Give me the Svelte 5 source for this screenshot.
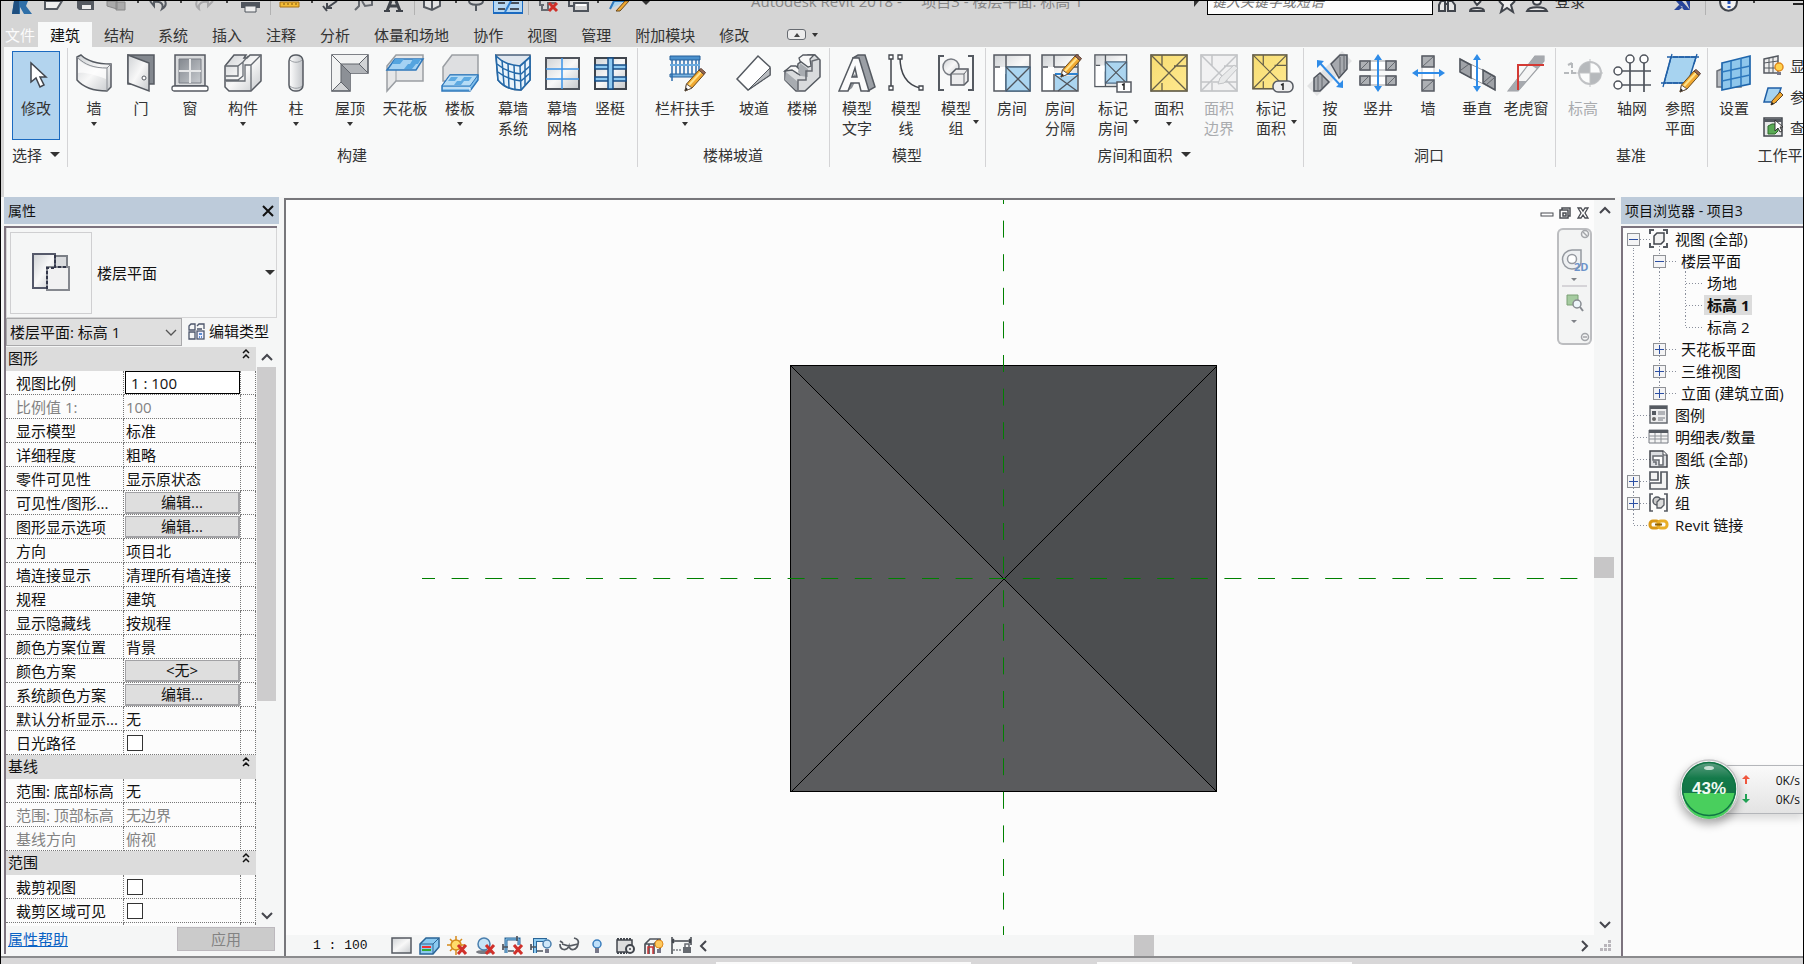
<script>
  const pencil = '<g transform="translate(14 14)"><path d="M5 23l1.500-7L19 2l5 4.500L12 20z" fill="#f0a830" stroke="#6b4a1c" stroke-width="1"/><path d="M9 17L21 4" stroke="#ffe28a" stroke-width="2"/><path d="M19 2l2-1.500 4.500 4L24 6.500z" fill="#9a6a50" stroke="#5b4038"/><path d="M5 23l1.500-7L12 20z" fill="#fff" stroke="#6b5a4c"/><path d="M5 23l1-3.500 2 1.800z" fill="#222"/></g>';
  const roomBase = '<rect x="1" y="1" width="36" height="36" fill="url(#steel)" stroke="#555a61" stroke-width="1.500"/><path d="M2 13h11v23H2z" fill="#fff"/><path d="M13 1v12M13 20v17M13 13h24M2 13h5" stroke="#555a61" stroke-width="1.500" fill="none"/>';
  const areaBase = '<rect x="1" y="1" width="36" height="36" fill="url(#gold)" stroke="#66604a" stroke-width="1.700"/><path d="M1 1l36 36M37 1L1 37M12 1v11M12 29v8M24 12h13" stroke="#66604a" stroke-width="1.300"/>';

  const icons = {
    modify: '<path d="M14 9v19l5-4 4 9 4-2-4-8h6z" fill="#fff" stroke="#41454d" stroke-width="1.500"/>',
    wall: '<path d="M2 3l4-2c6 6 15 9 30 9v23l-4 4C19 37 8 33 2 26z" fill="url(#steel)" stroke="#555a61" stroke-width="1.500"/><path d="M2 3c8 8 17 11 30 11v23M32 14l4-4" fill="none" stroke="#888c92"/><path d="M3 5c8 8 17 10 28 10v10C18 20 9 18 3 19z" fill="#fff" opacity=".7"/>',
    door: '<path d="M6 1h26v29H6z" fill="#83888f" stroke="#555a61" stroke-width="1.500"/><path d="M6 1l21 8v28L6 29z" fill="url(#steel)" stroke="#555a61" stroke-width="1.500"/><circle cx="22" cy="24" r="2" fill="#fff" stroke="#555a61"/>',
    window: '<path d="M4 1h30v31H4z" fill="#d9dbdd" stroke="#555a61" stroke-width="1.500"/><path d="M8 5h22v24H8z" fill="url(#glass)" stroke="#7a7f86"/><path d="M19 5v24M8 17h22" stroke="#e6e7e8" stroke-width="2"/><rect x="1" y="32" width="36" height="5" rx="2" fill="#fff" stroke="#555a61" stroke-width="1.300"/>',
    component: '<path d="M1 12L10 1h12l-2 3h3l3-3h11v26L27 37H5l-4-4z" fill="url(#steel)" stroke="#555a61" stroke-width="1.500"/><path d="M1 26h13l5-4V8l5-6M1 12h13v10H2M27 11v26M19 8l-5 4M37 1L27 11h-6v16H2" fill="none" stroke="#666b72" stroke-width="1.300"/>',
    column: '<rect x="12" y="1" width="14" height="36" rx="6" fill="url(#side)" stroke="#555a61" stroke-width="1.500"/><path d="M13 6c3 3 9 3 12 0M13 32c3 3 9 3 12 0" fill="none" stroke="#999da2"/>',
    roof: '<path d="M1 1h36v18H19v18H1z" fill="#d2d4d6" stroke="#555a61" stroke-width="1.500"/><path d="M1 1h36l-9 9H10v18l-9 9z" fill="#f2f3f3"/><path d="M28 10l9 9H19l-9-9z" fill="#b2b5b9"/><path d="M10 10l9 9v18l-9-9z" fill="#8c9096"/><path d="M1 1l9 9h18l9-9M28 10l9 9M10 10v18l-9 9M10 28l9 9M10 10l9 9" stroke="#60646b" fill="none"/>',
    ceiling: '<path d="M1 12L10 1h27v26H10L1 37z" fill="#e6e7e8" stroke="#9a9ea3" stroke-width="1.500"/><path d="M10 16v11" stroke="#9a9ea3"/><path d="M1 16L9 5h28l-7 11z" fill="#a5d2f3" stroke="#2f78bb" stroke-width="1.500"/><path d="M9 5h9l-4 5H6zM22 10h8l-4 5h-8zM27 5h8l-3 5h-8z" fill="#55a4df"/>',
    floor: '<path d="M2 13L11 1h26v22L28 27H2z" fill="#dedfe1" stroke="#9a9ea3" stroke-width="1.500"/><path d="M1 32L9 21h28v5l-8 11H1z" fill="#7fbdea" stroke="#2f78bb" stroke-width="1.500"/><path d="M1 32L9 21h28l-8 11z" fill="#b5dcf6" stroke="#2f78bb"/><path d="M10 23h7l-3 4H7zM23 23h8l-3 4h-8zM16 27h7l-3 4h-7z" fill="#5daae2"/><path d="M2 34h27v3" stroke="#fff" fill="none"/>',
    curtainSystem: '<path d="M2 1h34v25L27 36C15 36 8 31 4 26z" fill="#dfe6ee" stroke="#4b617c" stroke-width="1.500"/><path d="M2 2c7 7 14 9 24 10l10-9v23L27 36C15 36 8 31 4 26z" fill="#e8f3fb" stroke="#2368a8" stroke-width="1.700"/><path d="M3 10c7 6 14 9 24 10l9-8M4 18c7 6 14 8 23 9l9-8M8 6l2 25M14 9l1 25M20 11l1 25M26 12l1 24M31 8v23" fill="none" stroke="#2368a8" stroke-width="1.500"/>',
    curtainGrid: '<rect x="3" y="4" width="33" height="31" fill="url(#steel)" stroke="#4f545c" stroke-width="2"/><path d="M3 15h33M3 25h33M19 4v31" stroke="#3d94e8" stroke-width="1.500"/>',
    mullion: '<rect x="4" y="4" width="31" height="31" fill="url(#steel)" stroke="#3f454d" stroke-width="2"/><path d="M4 11h31v4H4zM4 23h31v4H4z" fill="#8fcaf2" stroke="#174e86" stroke-width="1.500"/><path d="M17 4h5v31h-5z" fill="#8fcaf2" stroke="#174e86" stroke-width="1.500"/>',
    railing: '<path d="M4 2h30v4H4z" fill="#4a90cc" stroke="#245f99"/><path d="M4 20h30v3H4z" fill="#7ab5e2" stroke="#245f99"/><path d="M6 6v21M10 6v14M14 6v14M18 6v14M22 6v14M26 6v14M30 6v14M33 6v14" stroke="#2d6ead" stroke-width="1.500"/><path d="M4 11h30" stroke="#6aaade" stroke-width="2"/>' + pencil,
    ramp: '<path d="M2 25L23 2l12 11v8L13 36z" fill="#fff" stroke="#555a61" stroke-width="1.500"/><path d="M13 36L35 14v7z" fill="#b9bcc0" stroke="#555a61"/>',
    stair: '<path d="M2 17l6-3 6 5 1-9 4-3 6 5V1h7l5 5v17L22 37h-9L2 26z" fill="#d9dbdd" stroke="#555a61" stroke-width="1.500"/><path d="M16 4l4-3h11l-4 4 1 7-3 1-8-6zM2 17l6-5h5l6 6-2 3-8-5z" fill="#f8f8f8" stroke="#555a61" stroke-width="1.300"/><path d="M17 9l8 6v8l-7-1-3-4zM3 18l12 10v8h-2L2 26z" fill="#a8acb1"/><path d="M15 36V26h8v-9h6V7l7-2" fill="none" stroke="#666a70" stroke-width="1.500"/>',
    modelText: '<path d="M15 4l5-3h7l10 32-7 4z" fill="#9b9fa5" stroke="#555a61" stroke-width="1.500"/><path d="M10 37l4-3 3-6h-4zM14 23l3-3 2 3z" fill="#8a8e94"/><path d="M1 37L15 4h6l10 33h-8l-2-8h-8l-3 8zM14 23h5l-2-9z" fill="#fbfbfb" fill-rule="evenodd" stroke="#555a61" stroke-width="1.500"/>',
    modelLine: '<path d="M4 3v31M13 3c0 18 8 28 20 31" fill="none" stroke="#41454c" stroke-width="1.500"/><path d="M2 1h4v4H2zM2 32h4v4H2zM11 1h4v4h-4zM32 32h4v4h-4z" fill="#fff" stroke="#41454c" stroke-width="1.300"/>',
    modelGroup: '<path d="M7 2H2v34h5M31 2h5v34h-5" fill="none" stroke="#555a61" stroke-width="2"/><circle cx="14" cy="13" r="8" fill="url(#steel)" stroke="#777b82" stroke-width="1.500"/><path d="M14 20l5-5h12v12l-4 4H14z" fill="#ececed" stroke="#555a61" stroke-width="1.500"/><path d="M14 20h13v11M27 20l4-5" fill="none" stroke="#666a70"/>',
    room: roomBase + '<path d="M13 13h24v24H13z" fill="#abd5f0" stroke="#4f6d88" stroke-width="1.500"/><path d="M13 13l24 24M37 13L13 37" stroke="#4f545c" stroke-width="1.300"/>',
    roomSep: roomBase + '<path d="M14 22h22v14H14z" fill="#abd5f0"/><path d="M14 20h23" stroke="#2d82d0" stroke-width="2"/><path d="M14 21l22 16M37 21L17 37" stroke="#4f545c" stroke-width="1.300"/><g transform="translate(1 -14)">' + pencil + '</g>',
    tagRoom: '<g transform="scale(.88)">' + roomBase + '<path d="M13 9h24v24H13z" fill="#abd5f0" stroke="#4f6d88" stroke-width="1.500"/><path d="M13 9l24 24M37 9L13 33" stroke="#4f545c" stroke-width="1.300"/></g><rect x="23" y="28" width="14" height="10" fill="#fff" stroke="#555a61" stroke-width="1.500"/><path d="M28 31l2-1v6" stroke="#222" stroke-width="1.500" fill="none"/>',
    area: areaBase,
    areaBoundary: '<g opacity=".4"><rect x="1" y="1" width="36" height="36" fill="#e7e7e9" stroke="#74777d" stroke-width="1.700"/><path d="M1 1l36 36M37 1L1 37M12 1v11M12 29v8M24 12h13M1 28h36" stroke="#74777d" stroke-width="1.500"/><path d="M18 30l2-6L34 11l4 3-14 15z" fill="#d2d2d4" stroke="#74777d"/></g>',
    tagArea: '<g transform="scale(.94)">' + areaBase + '</g><rect x="21" y="27" width="20" height="11" rx="5" fill="#eee" stroke="#555a61" stroke-width="1.500"/><path d="M29 31l2-1v6" stroke="#222" stroke-width="1.500" fill="none"/>',
    byFace: '<path d="M1 37L36 2" stroke="#e2e3e4" stroke-width="14"/><path d="M20 10l9-9h7v14l-8 9zM3 37V24l6-5 9 9-9 9z" fill="#a6a9ae" stroke="#4f545c" stroke-width="1.500"/><path d="M29 3v18M33 2v15M7 22v15M11 22v12" stroke="#65696f"/><path d="M8 8l22 24" stroke="#2f8ce8" stroke-width="2"/><path d="M6 6v8l7-7zM32 34v-8l-7 7z" fill="#2f8ce8"/>',
    shaft: '<path d="M1 7h36v9H1zM1 22h36v9H1z" fill="#fff" stroke="#9a9da2"/><path d="M1 7h10v9H1zM27 7h10v9H27zM1 22h10v9H1zM27 22h10v9H27z" fill="#adb0b4" stroke="#555a61" stroke-width="1.500"/><path d="M2 15l7-7M29 15l7-7M2 30l7-7M29 30l7-7" stroke="#666a70"/><path d="M19 4v30" stroke="#2f8ce8" stroke-width="2"/><path d="M19 0l-4 6h8zM19 38l-4-6h8z" fill="#2f8ce8"/>',
    wallOpen: '<path d="M13 2h12v34H13z" fill="#fff" stroke="#c0c2c5"/><path d="M13 2h12v11H13zM13 26h12v11H13z" fill="#adb0b4" stroke="#555a61" stroke-width="1.500"/><path d="M14 12l10-9M14 36l10-9" stroke="#666a70"/><path d="M6 19h27" stroke="#2f8ce8" stroke-width="2"/><path d="M3 19l6-4v8zM36 19l-6-4v8z" fill="#2f8ce8"/>',
    vertical: '<path d="M2 5l35 17v14L2 18z" fill="#fff" stroke="#9a9da2"/><path d="M2 5l11 6v13L2 18zM25 16l12 7v13l-12-7z" fill="#9fa2a7" stroke="#4f545c" stroke-width="1.500"/><path d="M3 16l8-6M26 28l8-7M28 31l8-7" stroke="#60646a"/><path d="M19 4v30" stroke="#2f8ce8" stroke-width="2"/><path d="M19 0l-4 6h8zM19 38l-4-6h8z" fill="#2f8ce8"/>',
    dormer: '<path d="M1 37L28 2h9v5L11 37z" fill="#f5f5f5" stroke="#9da0a5" stroke-width="1.200"/><path d="M22 10l6-8h9v5L30 15zM1 37l8-10h5l6 0-9 10z" fill="#a6a9ae"/><path d="M11 36V11h26" fill="none" stroke="#d33a34" stroke-width="2"/>',
    level: '<g opacity=".5"><path d="M0 19h20M8 9v9M4 11l4-2" stroke="#777b80" stroke-width="2" stroke-dasharray="5 2" fill="none"/><circle cx="26" cy="19" r="11" fill="#fff" stroke="#8a8d92" stroke-width="2"/><path d="M26 8a11 11 0 0 0-11 11h11zM26 30a11 11 0 0 0 11-11H26z" fill="#777b80"/><path d="M26 5v28M12 19h27" stroke="#8a8d92"/></g>',
    grid: '<path d="M17 9v29M31 9v29M9 17h29M9 31h29" stroke="#4f545c" stroke-width="1.700"/><g fill="#fff" stroke="#4f545c" stroke-width="1.500"><circle cx="17" cy="5" r="4"/><circle cx="31" cy="5" r="4"/><circle cx="5" cy="17" r="4"/><circle cx="5" cy="31" r="4"/></g>',
    refPlane: '<path d="M10 3h25l-8 26H3z" fill="#a7d3f0" stroke="#1f5fa6" stroke-width="1.500"/><path d="M6 3h32M0 29h30M11 0L2 33M36 0l-3 10" stroke="#1f5fa6" stroke-width="1.300" stroke-dasharray="5 1"/><g transform="translate(0 1)">' + pencil + '</g>',
    set: '<path d="M2 17l14-6h10v22H2z" fill="#b9bdc2" stroke="#6d7178" stroke-width="1.500"/><path d="M7 9l28-7v28L7 36z" fill="#8fc7ec" stroke="#1f66ac" stroke-width="1.700"/><path d="M7 18l28-6M7 27l28-6M16 7v27M26 4v28" stroke="#2d78bd" stroke-width="1.500"/>'
  };

  const groups = [
    { title: '构建', tools: [
      ['wall', '墙', '', 'w48', 'down'], ['door', '门', '', 'w46'], ['window', '窗', '', 'w52'], ['component', '构件', '', 'w54', 'down'],
      ['column', '柱', '', 'w52', 'down'], ['roof', '屋顶', '', 'w56', 'down'], ['ceiling', '天花板', '', 'w54'], ['floor', '楼板', '', 'w56', 'down'],
      ['curtainSystem', '幕墙', '系统', 'w50'], ['curtainGrid', '幕墙', '网格', 'w48'], ['mullion', '竖梃', '', 'w48']] },
    { title: '楼梯坡道', tools: [['railing', '栏杆扶手', '', 'w90', 'down'], ['ramp', '坡道', '', 'w48'], ['stair', '楼梯', '', 'w48']] },
    { title: '模型', tools: [['modelText', '模型', '文字', 'w50'], ['modelLine', '模型', '线', 'w48'], ['modelGroup', '模型', '组', 'w52', 'side']] },
    { title: '房间和面积', more: true, tools: [
      ['room', '房间', '', 'w48'], ['roomSep', '房间', '分隔', 'w48'], ['tagRoom', '标记', '房间', 'w58', 'side'], ['area', '面积', '', 'w54', 'down'],
      ['areaBoundary', '面积', '边界', 'w46', '', true], ['tagArea', '标记', '面积', 'w58', 'side']] },
    { title: '洞口', tools: [['byFace', '按', '面', 'w48'], ['shaft', '竖井', '', 'w48'], ['wallOpen', '墙', '', 'w52'], ['vertical', '垂直', '', 'w46'], ['dormer', '老虎窗', '', 'w52']] },
    { title: '基准', tools: [['level', '标高', '', 'w50', '', true], ['grid', '轴网', '', 'w48'], ['refPlane', '参照', '平面', 'w48']] }
  ];

  const smallTools = [
    ['显示', '<path d="M1 4l14-3v17H1z" fill="#eee" stroke="#555a61" stroke-width="1.500"/><path d="M6 3v15M10 2v16M1 8l14-2M1 13h14" stroke="#555a61"/><circle cx="16" cy="12" r="4" fill="#ffd34f" stroke="#e08a1e" stroke-width="1.500"/><path d="M14 17h4v3h-4z" fill="#778"/>'],
    ['参照', '<path d="M5 2h13l-5 14H1z" fill="#a7d3f0" stroke="#1f5fa6" stroke-width="1.500"/><path d="M8 19l1-4 8-9 3 3-8 8z" fill="#f0a830" stroke="#5d4326"/><path d="M8 19l1-3 2 2z" fill="#222"/>'],
    ['查看器', '<path d="M1 1h18v18H1z" fill="#e7e8e9" stroke="#41454c" stroke-width="1.500"/><path d="M1 2h18v3H1z" fill="#555a61"/><path d="M5 9l4-2h6v7l-3 3H5z" fill="#5aab55" stroke="#2d6a2a"/><path d="M12 3v11l3-3 2 4 2-1-2-4h3z" fill="#fff" stroke="#333"/>']
  ];

  const tabs = ['结构', '系统', '插入', '注释', '分析', '体量和场地', '协作', '视图', '管理', '附加模块', '修改'];

  const quick = [
    ['app', 38, 'Revit', '<path d="M5 0h14l-2 5 6 8h-8l-4-7v7H3z" fill="#2f6fa8"/><path d="M5 0h5v13H3z" fill="#1f4f80"/>'],
    ['open', 30, '打开', '<path d="M2 0h17l-5 8H2z" fill="#eee" stroke="#555a61" stroke-width="2"/>'],
    ['save', 32, '保存', '<path d="M3 0h17v9H5L3 7z" fill="#555a61"/><path d="M8 4h9v4H8z" fill="#eee"/>'],
    ['sync', 30, '同步', '<path d="M2 0h10v8L2 5zM11 1h9v8h-9z" fill="#aaa" stroke="#888"/>'],
    ['dot', 14], ['undo', 28, '放弃', '<path d="M2 0l4 5V1c7-1 10 2 8 7 5-3 4-6 3-8" fill="none" stroke="#555a61" stroke-width="2"/>'],
    ['dot', 16], ['redo', 30, '重做', '<path d="M20 0l-5 5V1C8 0 5 3 6 8 2 5 3 2 4 0" fill="none" stroke="#a8a8aa" stroke-width="2"/>'],
    ['dot', 16], ['print', 30, '打印', '<path d="M2 1h19v6H2z" fill="#4f545c"/><path d="M6 5h11v6H6z" fill="#eee" stroke="#4f545c"/>'],
    ['sep', 10], ['measure', 28, '测量', '<path d="M2 1h19v5H2z" fill="#f3bb35" stroke="#a87216"/><path d="M6 2v2M10 2v2M14 2v2M18 2v2" stroke="#7d5410"/>'],
    ['dot', 18], ['dims', 18, '对齐尺寸', '<path d="M18 0L8 7M8 2v5h5M4 5l4 5" fill="none" stroke="#444850" stroke-width="2"/>'],
    ['gap', 12], ['tag', 26, '标记', '<path d="M2 9l4-4V0M9 0l3 5 7-1V0" fill="none" stroke="#666a70" stroke-width="2"/>'],
    ['text', 32, '文字', '<path d="M5 10L9 0M14 0l4 10M8 5h7" stroke="#3f434a" stroke-width="3"/><path d="M2 10h6M14 10h7" stroke="#3f434a" stroke-width="2"/>'],
    ['sep', 10], ['view3d', 26, '三维视图', '<path d="M3 0v6l8 3 8-4V0" fill="#e3e4e5" stroke="#555a61" stroke-width="2"/><path d="M11 0v9" stroke="#555a61" stroke-width="2"/>'],
    ['dot', 22], ['section', 18, '剖面', '<path d="M4 0c0 5 14 5 14 0M11 4v6" fill="none" stroke="#555a61" stroke-width="2"/>'],
    ['gap', 8], ['thin', 30, '细线', '<path d="M1 2h7M1 8h7M13 2h9M13 8h9" stroke="#47505c" stroke-width="2"/><path d="M8 11l6-11" stroke="#2f7fd0" stroke-width="2"/>'],
    ['sep', 10], ['closeHidden', 30, '关闭隐藏窗口', '<path d="M3 0v4h4M5 4v5h6V2h8" fill="none" stroke="#666a70" stroke-width="2"/><path d="M12 2l8 8M20 2l-8 8" stroke="#cf2f28" stroke-width="3"/>'],
    ['switch', 30, '切换窗口', '<path d="M7 2h14v8H7zM2 0v5h4" fill="none" stroke="#4f545c" stroke-width="2"/><path d="M9 3h10v2H9z" fill="#fff"/>'],
    ['dot', 10], ['ui', 32, '用户界面', '<path d="M2 8L6 0h12" fill="#a7d3f0" stroke="#2d78bd" stroke-width="2"/><path d="M8 10l9-10h4l-9 10z" fill="#f0a830" stroke="#6b4a1c"/>'],
    ['caret', 22]
  ];

  const account = [
    ['搜索', '<path d="M3 10V4l2-4h4v10zM12 10V0h4l3 4v6zM8 3h5" fill="#e8e8e8" stroke="#41454c" stroke-width="2"/>'],
    ['通讯中心', '<path d="M8 0l3 4 4-4M4 10c0-4 14-4 14 0z" fill="#eee" stroke="#41454c" stroke-width="2"/>'],
    ['收藏夹', '<path d="M3 0l4 4-2 7 6-4 6 4-2-7 4-4" fill="#eee" stroke="#41454c" stroke-width="2"/>'],
    ['用户', '<path d="M7 0c0 5 8 5 8 0M1 10c2-5 18-5 20 0z" fill="#eee" stroke="#41454c" stroke-width="2"/>']
  ];

  const props = [
    { head: '图形' },
    { k: '视图比例', v: '1 : 100', type: 'input' },
    { k: '比例值 1:', v: '100', off: true },
    { k: '显示模型', v: '标准' },
    { k: '详细程度', v: '粗略' },
    { k: '零件可见性', v: '显示原状态' },
    { k: '可见性/图形...', v: '编辑...', type: 'button' },
    { k: '图形显示选项', v: '编辑...', type: 'button' },
    { k: '方向', v: '项目北' },
    { k: '墙连接显示', v: '清理所有墙连接' },
    { k: '规程', v: '建筑' },
    { k: '显示隐藏线', v: '按规程' },
    { k: '颜色方案位置', v: '背景' },
    { k: '颜色方案', v: '<无>', type: 'button' },
    { k: '系统颜色方案', v: '编辑...', type: 'button' },
    { k: '默认分析显示...', v: '无' },
    { k: '日光路径', type: 'check' },
    { head: '基线' },
    { k: '范围: 底部标高', v: '无' },
    { k: '范围: 顶部标高', v: '无边界', off: true },
    { k: '基线方向', v: '俯视', off: true },
    { head: '范围' },
    { k: '裁剪视图', type: 'check' },
    { k: '裁剪区域可见', type: 'check' },
    { k: '', type: 'check' }
  ];

  const treeIcons = {
    views: '<path d="M5 1H1v4M1 14v4h4M14 1h4v4M18 14v4h-4" fill="none" stroke="#555a61" stroke-width="2"/><path d="M5 7l3-3h7v8l-3 3H5z" fill="#f2f2f2" stroke="#41454c" stroke-width="1.500"/>',
    legend: '<path d="M1 1h17v17H1z" fill="#ededee" stroke="#666a70" stroke-width="1.500"/><path d="M1 1h17v3H1z" fill="#555a61"/><path d="M3 6h4v4H3z" fill="#555a61"/><circle cx="5" cy="14" r="2" fill="#666"/><path d="M9 7h7M9 9h7M9 13h7M9 15h5" stroke="#777b82"/>',
    schedule: '<path d="M0 3h19v13H0z" fill="#f4f4f4" stroke="#777b82"/><path d="M0 3h19v3H0z" fill="#555a61"/><path d="M0 9h19M0 12h19M6 6v10M12 6v10" stroke="#8d9196"/>',
    sheet: '<path d="M1 2h13l4 4v12H1z" fill="#dcdee1" stroke="#41454c" stroke-width="1.500"/><path d="M14 2v4h4" fill="#fff" stroke="#41454c"/><path d="M4 7h10v9h-4v-5H4z" fill="#fff" stroke="#666a70" stroke-width="1.500"/><path d="M4 13h3v3" fill="none" stroke="#666a70" stroke-width="1.500"/>',
    family: '<path d="M1 1h8v8H1zM12 1h6v17H1v-6h11z" fill="#f3f3f3" stroke="#555a61" stroke-width="1.700"/>',
    group: '<path d="M4 1H1v17h3M15 1h3v17h-3" fill="none" stroke="#555a61" stroke-width="1.700"/><circle cx="8" cy="8" r="4" fill="#ccc" stroke="#555a61" stroke-width="1.500"/><path d="M8 9l3-3h4v6l-3 3H8z" fill="#ddd" stroke="#555a61" stroke-width="1.300"/>',
    link: '<rect x="1" y="6" width="9" height="7" rx="3" fill="none" stroke="#d99714" stroke-width="3"/><rect x="9" y="6" width="9" height="7" rx="3" fill="none" stroke="#e9ae26" stroke-width="3"/><path d="M6 9.500h7" stroke="#8f6208" stroke-width="2"/>'
  };

  const tree = [
    { l: 1, t: '视图 (全部)', box: '-', icon: 'views', first: true, down: true },
    { l: 2, t: '楼层平面', box: '-', down: true },
    { l: 3, t: '场地' },
    { l: 3, t: '标高 1', sel: true },
    { l: 3, t: '标高 2', last: true },
    { l: 2, t: '天花板平面', box: '+' },
    { l: 2, t: '三维视图', box: '+' },
    { l: 2, t: '立面 (建筑立面)', box: '+', last: true },
    { l: 1, t: '图例', icon: 'legend' },
    { l: 1, t: '明细表/数量', icon: 'schedule' },
    { l: 1, t: '图纸 (全部)', icon: 'sheet' },
    { l: 1, t: '族', box: '+', icon: 'family' },
    { l: 1, t: '组', box: '+', icon: 'group' },
    { l: 1, t: 'Revit 链接', icon: 'link', last: true }
  ];
  const treeWidth = { 1: 50, 2: 56, 3: 82 };

  const cross = '<path d="M11 9l8 9M19 9l-8 9" stroke="#d0302a" stroke-width="3"/>';
  const viewTools = [
    ['详细程度', '<rect x="1" y="2" width="19" height="15" fill="url(#steel)" stroke="#555a61" stroke-width="1.500"/>'],
    ['视觉样式', '<path d="M1 8l6-6h13v9l-6 7H1z" fill="#8ccaf0" stroke="#2a6496" stroke-width="1.500"/><path d="M1 8h13v10M14 8l6-6" stroke="#2a6496" fill="none"/><path d="M3 11h9" stroke="#e33" stroke-width="2"/><path d="M3 14h9" stroke="#3a3" stroke-width="2"/>'],
    ['日光路径', '<path d="M9 0v19M0 9h18M3 3l12 12M15 3L3 15" stroke="#d58a1b" stroke-width="1.500"/><circle cx="9" cy="9" r="5" fill="#ffdc6b" stroke="#d58a1b" stroke-width="1.500"/>' + cross],
    ['阴影', '<ellipse cx="9" cy="16" rx="8" ry="2" fill="#777b82"/><circle cx="9" cy="8" r="6" fill="#c7e4f7" stroke="#4a7fae" stroke-width="1.500"/>' + cross],
    ['裁剪视图', '<path d="M3 17V3h13v6" fill="none" stroke="#2a6496" stroke-width="3"/><path d="M3 17V3h13v6" fill="none" stroke="#8ccaf0" stroke-width="1"/><path d="M0 11h5M14 0v5M0 8v6M5 15h6" fill="none" stroke="#4f545c" stroke-width="1.700"/>' + cross],
    ['显示裁剪区域', '<path d="M4 17V4h12" fill="none" stroke="#2a6496" stroke-width="4"/><path d="M4 17V4h12" fill="none" stroke="#8ccaf0" stroke-width="2"/><path d="M0 11h5M0 8v6M6 15h6" fill="none" stroke="#4f545c" stroke-width="1.700"/><circle cx="16" cy="8" r="4" fill="#cfe8fa" stroke="#4a7fae" stroke-width="1.500"/><path d="M14 13h4v4h-4z" fill="#778"/>'],
    ['临时隐藏', '<path d="M1 5l3 2M1 8c0 7 7 7 9 2 1 6 8 4 9-2 1-3 0-5-4-6M3 8l7 2 9-2" fill="none" stroke="#555a61" stroke-width="1.700"/>'],
    ['显示隐藏图元', '<circle cx="10" cy="8" r="4" fill="#bfe0fa" stroke="#3a7dbd" stroke-width="1.500"/><path d="M8 12h4v5H8z" fill="#778"/>'],
    ['临时视图属性', '<path d="M2 4h15v12H2z" fill="#ddd" stroke="#41454c" stroke-width="1.500"/><path d="M2 3h15M2 17h10" stroke="#41454c" stroke-width="2" stroke-dasharray="2 1"/><circle cx="15" cy="13" r="4" fill="#eee" stroke="#41454c" stroke-width="2"/><circle cx="15" cy="13" r="1" fill="#41454c"/>'],
    ['分析模型', '<path d="M2 18V8l5-5h10v10M2 8h9l5-5M11 8v10M6 8v10" fill="none" stroke="#4f545c" stroke-width="1.700"/><path d="M5 18v-7h5v7" fill="none" stroke="#c33" stroke-width="1.500"/><circle cx="16" cy="8" r="4" fill="#ffc95c" stroke="#e08a1e"/><path d="M14 13h4v4h-4z" fill="#778"/>'],
    ['显示约束', '<path d="M1 1v17M20 1v8M1 5h19M3 3l-2 2 2 2M18 3l2 2-2 2" fill="none" stroke="#41454c" stroke-width="1.500"/><path d="M2 14h8" stroke="#41454c" stroke-dasharray="2 1"/><path d="M12 11h8v6h-8z" fill="#666a70"/><path d="M14 11V8h4v3" fill="none" stroke="#666a70" stroke-width="1.500"/>']
  ];
</script>

{#snippet chev(d)}
  <svg class="chev" viewBox="0 0 12 12"><path d={d} fill="none" stroke="#45464d" stroke-width="2" /></svg>
{/snippet}

{#snippet tool([icon, a, b, w, arrow, off])}
  <button class="tool {w}" class:off disabled={off}>
    <svg class="big" viewBox="0 0 38 38">{@html icons[icon]}</svg>
    <span>{a}</span>
    {#if b}<span>{b}</span>{/if}
    {#if arrow === 'down'}<i class="tri under"></i>{/if}
    {#if arrow === 'side'}<i class="tri aside"></i>{/if}
  </button>
{/snippet}

<svg class="defs" aria-hidden="true">
  <defs>
    <linearGradient id="steel" x1="0" y1="0" x2="1" y2="1"><stop offset="0" stop-color="#cfd2d5" /><stop offset=".5" stop-color="#f8f8f8" /><stop offset="1" stop-color="#c6c9cc" /></linearGradient>
    <linearGradient id="side"><stop offset="0" stop-color="#fff" /><stop offset="1" stop-color="#c2c5c9" /></linearGradient>
    <linearGradient id="glass" x1="0" y1="0" x2="1" y2="1"><stop offset="0" stop-color="#83888f" /><stop offset="1" stop-color="#c9ccd0" /></linearGradient>
    <linearGradient id="gold" x1="0" y1="0" x2="1" y2="1"><stop offset="0" stop-color="#f7dd72" /><stop offset="1" stop-color="#ffe98f" /></linearGradient>
    <linearGradient id="orb" x1="0" y1="0" x2="0" y2="1"><stop offset="0" stop-color="#5f9f83" /><stop offset=".3" stop-color="#147a4a" /><stop offset="1" stop-color="#0d6e42" /></linearGradient>
  </defs>
</svg>

<div class="app">
  <header class="titlebar">
    <div class="quick">
      {#each quick as [id, w, label, art]}
        {#if id === 'sep'}
          <i class="qsep" style:width="{w}px"></i>
        {:else if id === 'gap'}
          <i style:width="{w}px"></i>
        {:else if id === 'dot' || id === 'caret'}
          <button class="qbtn" aria-label="展开" style:width="{w}px"><i class="nub" class:wide={id === 'caret'}></i></button>
        {:else}
          <button class="qbtn" class:on={id === 'thin'} aria-label={label} style:width="{w}px"><svg width="23" height="14" viewBox="0 0 23 14">{@html art}</svg></button>
        {/if}
      {/each}
    </div>
    <h1 class="cut">Autodesk Revit 2018 - &nbsp; &nbsp; 项目3 - 楼层平面: 标高 1</h1>
    <svg class="play" width="5" height="7" viewBox="0 0 5 7"><path d="M0 0h5L0 6z" fill="#333" /></svg>
    <input class="search" aria-label="搜索" placeholder="键入关键字或短语" />
    <div class="account">
      {#each account as [label, art]}
        <button class="qbtn acc" aria-label={label}><svg width="23" height="14" viewBox="0 0 23 14">{@html art}</svg></button>
      {/each}
      <a class="cut login" href="#login">登录</a>
    </div>
    <div class="help">
      <button class="qbtn" aria-label="Exchange"><svg width="23" height="14" viewBox="0 0 23 14"><path d="M5 0h6l8 9h-6zM8 4L3 9h5l4-3zM15 0h4v9z" fill="#27449a" /></svg></button>
      <i class="qsep"></i>
      <button class="qbtn" aria-label="帮助"><svg width="23" height="14" viewBox="0 0 23 14"><path d="M3 0c0 13 17 13 17 0" fill="#f2f2f2" stroke="#41454c" stroke-width="2" /><path d="M12 0v3M12 5v2" stroke="#2b56b8" stroke-width="3" /></svg></button>
      <button class="qbtn" aria-label="更多"><i class="nub"></i></button>
      <button class="qbtn min" aria-label="最小化"></button>
    </div>
  </header>

  <nav class="tabs">
    <a class="file" href="#file">文件</a>
    <a class="active" href="#build">建筑</a>
    {#each tabs as t}<a href="#tab">{t}</a>{/each}
    <button class="toggle" aria-label="最小化功能区"><i class="up"></i></button>
    <i class="tri"></i>
  </nav>

  <section class="ribbon">
    <div class="group first">
      <div class="tools"><button class="tool w48 picked"><svg class="big" viewBox="0 0 38 38">{@html icons.modify}</svg><span>修改</span></button></div>
      <div class="gtitle">选择 <i class="tri lg"></i></div>
    </div>
    {#each groups as g}
      <div class="group">
        <div class="tools">{#each g.tools as t}{@render tool(t)}{/each}</div>
        <div class="gtitle">{g.title} {#if g.more}<i class="tri lg"></i>{/if}</div>
      </div>
    {/each}
    <div class="group cutoff">
      <div class="tools">
        {@render tool(['set', '设置', '', 'w48'])}
        <div class="stack">
          {#each smallTools as [label, art]}
            <button class="small"><svg width="21" height="21" viewBox="0 0 21 21">{@html art}</svg>{label}</button>
          {/each}
        </div>
      </div>
      <div class="gtitle">工作平面</div>
    </div>
  </section>

  <main>
    <aside class="props">
      <div class="phead"><h2>属性</h2><button aria-label="关闭"><svg width="12" height="12" viewBox="0 0 12 12"><path d="M1 1l10 10M11 1L1 11" stroke="#111" stroke-width="2" /></svg></button></div>
      <div class="pbody">
        <button class="kind">
          <span class="thumb"><svg width="42" height="42" viewBox="0 0 42 42"><path d="M23 4h14v13H23z" fill="#d9dbde" stroke="#7b7f86" stroke-width="2" /><path d="M3 2h22v34H3z" fill="url(#steel)" stroke="#55596a" stroke-width="2" /><path d="M17 15h22v23H17z" fill="#f1f1f2" stroke="#85888f" stroke-width="2" /><path d="M25 3v12h12M17 37V16h8" fill="none" stroke="#33374a" stroke-width="2" stroke-dasharray="3 2" /></svg></span>
          <span>楼层平面</span><i class="tri lg"></i>
        </button>
        <div class="pick">
          <div class="combo">
            <select aria-label="实例"><option>楼层平面: 标高 1</option></select>
            <svg width="12" height="8" viewBox="0 0 12 8"><path d="M1 1l5 5 5-5" fill="none" stroke="#555" stroke-width="1.300" /></svg>
          </div>
          <button class="edit"><svg width="17" height="17" viewBox="0 0 17 17"><path d="M1 3l2-2h4v6H1zM9 3l2-2h5v5M1 9h6v7H1zM9 6h5" fill="none" stroke="#4c566b" stroke-width="1.300" /><rect x="9" y="8" width="7" height="8" fill="#eef" stroke="#4c566b" stroke-width="1.300" /><path d="M11 11h3M11 14h1M13 14h1" stroke="#2b6fc2" stroke-width="1.500" /></svg>编辑类型</button>
        </div>
        <div class="scroller">
          <div class="tablebox">
            <table>
              <colgroup><col class="c1" /><col class="c2" /><col class="c3" /></colgroup>
              <tbody>
                {#each props as p, i}
                  {#if p.head}
                    <tr class="head"><th colspan="3"><div>{p.head}<svg width="8" height="10" viewBox="0 0 8 10"><path d="M1 4l3-3 3 3M1 9l3-3 3 3" fill="none" stroke="#111" stroke-width="1.500" /></svg></div></th></tr>
                  {:else}
                    <tr class:off={p.off}>
                      <td class="key"><label for="p{i}">{p.k}</label></td>
                      <td class="val">
                        {#if p.type === 'input'}<input id="p{i}" class="field" value={p.v} />
                        {:else if p.type === 'button'}<button id="p{i}" class="cellbtn">{p.v}</button>
                        {:else if p.type === 'check'}<input id="p{i}" type="checkbox" />
                        {:else}<output id="p{i}">{p.v}</output>{/if}
                      </td>
                      <td></td>
                    </tr>
                  {/if}
                {/each}
              </tbody>
            </table>
          </div>
          <div class="vbar">
            <span class="cap">{@render chev('M1 9l5-5 5 5')}</span>
            <div class="track"><i class="thumbbar"></i></div>
            <span class="cap">{@render chev('M1 3l5 5 5-5')}</span>
          </div>
        </div>
        <div class="pfoot"><a href="#help">属性帮助</a><button disabled>应用</button></div>
      </div>
    </aside>

    <section class="doc">
      <div class="row">
        <div class="canvas">
          <svg class="plan" aria-label="楼层平面">
            <path d="M505 166h426L718 379z" fill="#4d4f51" />
            <path d="M931 166v426L718 379z" fill="#4c4e50" />
            <path d="M505 166v426l213-213z" fill="#5a5b5d" />
            <path d="M505 592h426L718 379z" fill="#5a5b5d" />
            <path d="M505 166l426 426M931 166L505 592" stroke="#000" stroke-width="1" fill="none" />
            <rect x="504.500" y="165.500" width="426" height="426" fill="none" stroke="#000" />
            <path d="M717.500 0v736" stroke="#008000" stroke-dasharray="17 16.600" stroke-dashoffset="13" />
            <path d="M136 378.500h1156" stroke="#008000" stroke-dasharray="17 16.600" stroke-dashoffset="4" />
          </svg>
          <div class="winbtns">
            <button aria-label="最小化"><svg width="14" height="14" viewBox="0 0 14 14"><rect x="1" y="7" width="12" height="3" fill="#fff" stroke="#4a4c52" /></svg></button>
            <button aria-label="还原"><svg width="14" height="14" viewBox="0 0 14 14"><path d="M4 4V2h8v8h-2M2 4h8v8H2zM5 7h3v3H5z" fill="none" stroke="#4a4c52" stroke-width="1.500" /></svg></button>
            <button aria-label="关闭"><svg width="14" height="14" viewBox="0 0 14 14"><path d="M2 2h3l2 3 2-3h3L9 7l3 5H9L7 9l-2 3H2l3-5z" fill="#fff" stroke="#4a4c52" stroke-width="1.300" /></svg></button>
          </div>
          <div class="navbar">
            <svg width="35" height="117" viewBox="0 0 35 117">
              <g fill="none" stroke="#a3a5a9" stroke-width="1.500"><circle cx="28" cy="6" r="3.500" /><path d="M26 4l4 4" /><circle cx="28" cy="109" r="3.500" /><path d="M26 109h4" /></g>
              <path d="M24 22v12c0 6-5 7-9 7a9.500 9.500 0 1 1 0-19z" fill="#eef0f2" stroke="#9599a0" stroke-width="1.500" /><circle cx="15" cy="31" r="4.500" fill="#fff" stroke="#9599a0" stroke-width="1.500" />
              <text x="17" y="43" class="twod">2D</text>
              <path d="M14 50h6l-3 3zM14 92h6l-3 3z" fill="#7f8288" /><path d="M5 58h25" stroke="#b8b4bc" />
              <path d="M10 67h11v10H10z" fill="#a5cba0" stroke="#7ba075" /><circle cx="20" cy="76" r="4" fill="#eef6fb" stroke="#878b91" stroke-width="1.500" /><path d="M23 79l3 4" stroke="#878b91" stroke-width="2" />
            </svg>
          </div>
        </div>
        <div class="vbar canvasbar">
          <span class="cap">{@render chev('M1 9l5-5 5 5')}</span>
          <div class="track mid"><i class="block"></i></div>
          <span class="cap">{@render chev('M1 3l5 5 5-5')}</span>
        </div>
      </div>
      <div class="viewbar">
        <button class="scale">1 : 100</button>
        {#each viewTools as [label, art]}
          <button class="vt" aria-label={label}><svg width="21" height="19" viewBox="0 0 21 19">{@html art}</svg></button>
        {/each}
        <div class="hbar">
          <span>{@render chev('M8 1L3 6l5 5')}</span>
          <i class="block"></i>
          <span>{@render chev('M4 1l5 5-5 5')}</span>
        </div>
        <svg class="grip" width="12" height="12" viewBox="0 0 12 12"><path d="M8 0h3v3H8zM4 4h3v3H4zM8 4h3v3H8zM0 8h3v3H0zM4 8h3v3H4zM8 8h3v3H8z" fill="#b9b6bb" /></svg>
      </div>
    </section>

    <aside class="browser">
      <div class="phead"><h2>项目浏览器 - 项目3</h2></div>
      <ul class="tree">
        {#each tree as n}
          <li>
            <svg width={treeWidth[n.l]} height="22" viewBox="0 0 {treeWidth[n.l]} 22">
              <g stroke="#8a8f9c" stroke-dasharray="1 2" fill="none">
                <path d="M8.500 {n.first ? 11 : 0}V{n.l === 1 && n.last ? 11 : 22}" />
                {#if n.l === 1}<path d="M9 11.500h18" />{/if}
                {#if n.first}<path d="M34.500 18v4" />{/if}
                {#if n.l === 2}<path d="M34.500 0V{n.last ? 11 : 22}M35 11.500h17" />{/if}
                {#if n.l === 2 && n.down}<path d="M60.500 18v4" />{/if}
                {#if n.l === 3}<path d="M34.500 0v22M60.500 0V{n.last ? 11 : 22}M61 11.500h17" />{/if}
              </g>
              {#if n.box}
                <g transform="translate({n.l === 1 ? 2 : 28} 5)">
                  <rect x=".5" y=".5" width="12" height="12" fill="#f4f4f5" stroke="#8f9196" />
                  <path d="M2 6.500h9" stroke="#2c4fa3" stroke-width="1" />
                  {#if n.box === '+'}<path d="M6.500 2v9" stroke="#2c4fa3" stroke-width="1" />{/if}
                </g>
              {/if}
              {#if n.icon}<g transform="translate(24 1)">{@html treeIcons[n.icon]}</g>{/if}
            </svg>
            <span class:sel={n.sel}>{n.t}</span>
          </li>
        {/each}
      </ul>
    </aside>
  </main>

  <footer><i></i><i></i></footer>

  <div class="meter">
    <svg width="60" height="60" viewBox="0 0 60 60">
      <circle cx="30" cy="30" r="29" fill="#f6f6f6" stroke="#c3c3c5" stroke-width="1.500" />
      <circle cx="30" cy="30" r="27" fill="url(#orb)" />
      <path d="M4 34h52a26 26 0 0 1-52 0z" fill="#49cf5d" />
      <circle cx="30" cy="30" r="26.500" fill="none" stroke="#107445" stroke-width="1.500" />
      <ellipse cx="30" cy="9" rx="5" ry="2" fill="#fff" opacity=".7" />
      <text x="30" y="35" text-anchor="middle" class="pct">43%</text>
    </svg>
    <div class="speeds">
      <p><svg width="8" height="10" viewBox="0 0 8 10"><path d="M4 0l4 4H5v5H3V4H0z" fill="#f0583f" /></svg>0K/s</p>
      <p><svg width="8" height="10" viewBox="0 0 8 10"><path d="M4 9L0 5h3V0h2v5h3z" fill="#22a356" /></svg>0K/s</p>
    </div>
  </div>
</div>

<style>
  :global(body) { background: #d5d5d5; }
  * { box-sizing: border-box; margin: 0; }
  .app {
    position: relative; display: flex; flex-direction: column; height: 100vh; overflow: hidden;
    background: #d5d5d5; border: solid #000; border-width: 1px 1px 0 1px; color: #111;
    font: 15px/20px "Open Sans", "Noto Sans CJK SC", sans-serif;
  }
  button, input, select { font: inherit; color: inherit; padding: 0; border: 0; background: none; border-radius: 0; }
  svg { display: block; flex: none; overflow: visible; }
  i { display: block; flex: none; }
  .defs { position: absolute; width: 0; height: 0; }
  h1, h2 { font-size: 14px; font-weight: 400; }

  .tri { width: 0; height: 0; border: solid transparent; border-width: 4px 3px 0; border-top-color: #333; }
  .tri.lg { border-width: 5px 5px 0; }
  .chev { width: 12px; height: 12px; }

  .titlebar { display: flex; flex: none; height: 21px; overflow: hidden; align-items: flex-start; }
  .quick, .account, .help { display: flex; flex: none; }
  .qbtn { display: flex; justify-content: center; height: 14px; }
  .qbtn.on { background: #b5d6f1; border: solid #1b6ac0; border-width: 0 1px 2px; height: 13px; }
  .qsep { height: 14px; background: linear-gradient(#b2b2b2, #b2b2b2) center / 1px 100% no-repeat; }
  .nub { width: 2px; height: 2px; background: #444; }
  .nub.wide { width: 8px; height: 4px; background: none; border: solid transparent; border-width: 4px 4px 0; border-top-color: #333; }
  .cut { margin-top: -10px; line-height: 20px; }
  h1 { flex: 1; padding-left: 94px; font-size: 15px; color: #858585; white-space: pre; }
  .play { margin-right: 8px; }
  .search { flex: none; width: 226px; height: 34px; margin-top: -20px; padding: 6px 4px 0; border: 1px solid #000; background: #fdfdfd; font-size: 14px; font-style: italic; }
  .search::placeholder { color: #777; opacity: 1; }
  .acc { width: 30px; }
  .login { padding-left: 2px; color: #333; text-decoration: none; }
  .help { padding-left: 84px; }
  .help .qbtn { width: 26px; }
  .help .qsep { width: 20px; }
  .help .min { width: 10px; height: 4px; margin-left: 26px; border-bottom: 2px solid #222; }

  .tabs { display: flex; flex: none; height: 25px; align-items: center; }
  .tabs a { height: 25px; padding: 0 12px; line-height: 26px; color: #333; text-decoration: none; white-space: nowrap; }
  .tabs .file { padding: 0 3px 0 4px; color: #fbfbfb; }
  .tabs .active { padding: 0 12px; background: #f8f9f9; color: #111; }
  .toggle { display: grid; place-items: center; width: 19px; height: 11px; margin: 0 6px 0 26px; border: 1px solid #666a70; border-radius: 3px; background: #ececec; }
  .up { border: solid transparent; border-width: 0 3px 4px; border-bottom-color: #444; }

  .ribbon { display: flex; flex: none; height: 150px; margin-left: 3px; padding-top: 1px; background: #f8f9f9; overflow: hidden; }
  .group { flex: none; display: flex; flex-direction: column; height: 119px; padding: 3px 3px 0 2px; border-right: 1px solid #d4d4d6; }
  .group.first { padding: 3px 7px 0 8px; }
  .group.cutoff { border: 0; width: 120px; }
  .tools { display: flex; height: 89px; }
  .gtitle { display: flex; align-items: center; justify-content: center; gap: 8px; height: 27px; padding-top: 2px; color: #333; white-space: nowrap; }
  .cutoff .gtitle { padding-left: 40px; }
  .tool { position: relative; flex: none; display: flex; flex-direction: column; align-items: center; padding-top: 3px; color: #333; white-space: nowrap; }
  .tool .big { width: 38px; height: 38px; margin-bottom: 6px; }
  .picked { padding-top: 2px; border: 1px solid #1b6ac0; background: #b3d4ee; }
  .off { color: #a9abae; }
  .under { margin-top: 4px; }
  .aside { position: absolute; right: 3px; top: 69px; }
  .w46 { width: 46px; } .w48 { width: 48px; } .w50 { width: 50px; } .w52 { width: 52px; } .w54 { width: 54px; } .w56 { width: 56px; } .w58 { width: 58px; } .w90 { width: 90px; }
  .stack { display: flex; flex-direction: column; gap: 10px; padding: 4px 0 0 5px; }
  .small { display: flex; align-items: center; gap: 6px; height: 21px; color: #333; white-space: nowrap; }

  main { display: flex; flex: 1; min-height: 0; padding-left: 3px; background: #f5f6f6; border-bottom: 2px solid #8b8b8d; }
  .phead { display: flex; flex: none; align-items: center; justify-content: space-between; height: 27px; padding: 0 5px 0 4px; background: #bdcbda; }
  h2 { color: #111; white-space: nowrap; }
  .props { flex: none; display: flex; flex-direction: column; width: 275px; }
  .pbody { display: flex; flex: 1; min-height: 0; flex-direction: column; margin: 2px 2px 2px 0; border: solid #7c737e; border-width: 2px 0 0 2px; }
  .kind { display: flex; flex: none; align-items: center; gap: 5px; height: 90px; padding: 0 1px 0 3px; border: 1px solid #d5d5d6; border-top: 0; }
  .kind .tri { margin-left: auto; }
  .thumb { display: grid; place-items: center; width: 82px; height: 82px; border: 1px solid #cfcfd1; }
  .pick { display: flex; flex: none; align-items: flex-start; gap: 6px; height: 29px; }
  .combo { position: relative; width: 176px; height: 28px; border: 1px solid #a9a9ab; background: #dfdfdf; }
  .combo select { width: 100%; height: 100%; padding-left: 3px; appearance: none; }
  .combo svg { position: absolute; right: 4px; top: 10px; pointer-events: none; }
  .edit { display: flex; align-items: center; gap: 4px; height: 26px; white-space: nowrap; }
  .scroller { display: flex; flex: 1; min-height: 0; }
  .tablebox { flex: 1; overflow: hidden; background: #fcfcfc; }
  table { width: 100%; table-layout: fixed; border-spacing: 0; }
  .c2 { width: 117px; } .c3 { width: 15px; }
  td, th { height: 24px; padding: 0; line-height: 20px; font-weight: 400; text-align: left; white-space: nowrap; }
  td { border: dotted #777; border-width: 0 1px 1px 0; overflow: hidden; }
  th { background: #dcdcdc; }
  th div { display: flex; justify-content: space-between; height: 24px; padding: 1px 6px 0 2px; }
  th svg { margin-top: 1px; }
  .key { padding-left: 10px; }
  .val { padding-left: 1px; }
  tr.off { color: #828282; }
  .key label, .val output, .val input, .val button { display: block; }
  .val output { padding-left: 1px; }
  .field { width: 115px; height: 23px; padding-left: 5px; border: 1px solid #000; background: #fff; }
  .cellbtn { width: 115px; height: 22px; border: 1px solid #a2a2a5; border-width: 1px 2px 2px 1px; background: #dedede; line-height: 19px; }
  input[type="checkbox"] { appearance: none; width: 16px; height: 16px; margin-left: 2px; border: 1px solid #333; background: #fff; }
  .vbar { display: flex; flex: none; flex-direction: column; width: 21px; }
  .canvasbar { width: 21px; }
  .cap { display: grid; place-items: center; height: 20px; }
  .track { flex: 1; min-height: 0; padding: 0 1px; }
  .track.mid { display: flex; align-items: center; padding: 0; }
  .thumbbar { height: 62%; background: #cdcccd; }
  .block { width: 20px; height: 21px; background: #c7c6c7; }
  .pfoot { display: flex; flex: none; align-items: center; justify-content: space-between; height: 28px; padding: 0 2px 2px 2px; }
  .pfoot a { color: #0a62c4; }
  .pfoot button { width: 98px; height: 24px; border: 1px solid #bcb8bd; background: #cbcbcb; color: #838383; }

  .doc { display: flex; flex: 1; min-width: 0; flex-direction: column; margin: 1px 6px 0 5px; border: solid #77777b; border-width: 2px 0 0 2px; }
  .row { display: flex; flex: 1; min-height: 0; }
  .canvas { position: relative; flex: 1; min-width: 0; overflow: hidden; background: #fcfcfc; }
  .plan { width: 100%; height: 100%; }
  .winbtns { position: absolute; top: 6px; right: 4px; display: flex; gap: 4px; }
  .navbar { position: absolute; top: 28px; right: 2px; border-radius: 6px; background: #f3f4f4; box-shadow: inset 0 0 0 2px #bcbdc0; }
  .twod { font: 700 11px "Open Sans", sans-serif; fill: #6c93c9; }
  .viewbar { display: flex; flex: none; align-items: center; height: 21px; padding-left: 27px; }
  .scale { margin-right: 20px; font: 13px/20px "Liberation Mono", monospace; }
  .vt { display: grid; place-items: center; width: 28px; height: 20px; }
  .hbar { display: flex; flex: 1; align-items: center; justify-content: space-between; padding: 0 5px 0 2px; }
  .grip { margin: 0 3px 0 5px; }

  .browser { flex: none; display: flex; flex-direction: column; width: 182px; }
  .tree { flex: 1; margin: 2px 0 0; padding: 0 0 0 2px; border: solid #7c737e; border-width: 2px 0 0 2px; background: #fcfcfc; list-style: none; overflow: hidden; }
  .tree li { display: flex; align-items: center; height: 22px; white-space: nowrap; }
  .sel { margin-left: -3px; padding: 0 3px; background: #dcdcdc; font-weight: 700; }

  footer { display: flex; flex: none; gap: 126px; height: 6px; padding: 4px 0 0 715px; background: #d8d7d8; }
  footer i { width: 255px; height: 2px; background: #fafafa; }

  .meter { position: absolute; right: 0; bottom: 145px; display: flex; align-items: center; width: 124px; }
  .meter > svg { z-index: 1; border-radius: 50%; box-shadow: 0 5px 10px #0005; }
  .speeds { flex: 1; margin-left: -24px; padding: 5px 3px 4px 26px; border: 1px solid #b4b6ba; border-right: 0; background: linear-gradient(#fafafa, #e3e3e3); box-shadow: 0 5px 8px #0002; }
  .speeds p { display: flex; align-items: center; justify-content: space-between; height: 19px; font: 12px/19px "Open Sans", sans-serif; }
  .pct { font: 700 17px "Liberation Sans", sans-serif; fill: #f0faf3; }
</style>
